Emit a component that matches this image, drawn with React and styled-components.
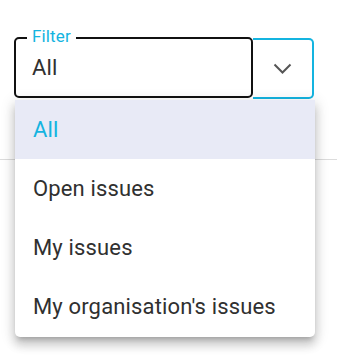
import React from "react";
import styled, { createGlobalStyle } from "styled-components";

const cyan = "#14b4e0";
const ink = "#303030";

const GlobalStyle = createGlobalStyle`
  body {
    margin: 0;
    background: #ffffff;
    font-family: Roboto, "Liberation Sans", sans-serif;
    letter-spacing: 0.00938em;
  }
`;

const Page = styled.main`
  position: relative;
  width: 337px;
  height: 360px;
  overflow: hidden;
`;

const Header = styled.div`
  height: 122px;
  padding: 37px 0 0 14px;
  border-bottom: 1px solid #dcdcdc;
`;

const FieldRow = styled.div`
  display: flex;
`;

const Field = styled.div`
  position: relative;
  box-sizing: border-box;
  width: 239px;
  height: 61px;
  border: 2px solid #111;
  border-radius: 5px;
  display: flex;
  align-items: center;
  padding: 0 16px;
  font-size: 22px;
  color: ${ink};
`;

const Label = styled.span`
  position: absolute;
  top: -13px;
  left: 11px;
  padding: 0 5px;
  background: #fff;
  font-size: 17px;
  line-height: 20px;
  color: ${cyan};
`;

const Toggle = styled.button`
  box-sizing: border-box;
  width: 61px;
  height: 61px;
  border: 2px solid ${cyan};
  border-left: none;
  border-radius: 0 5px 5px 0;
  background: #fff;
  display: flex;
  align-items: center;
  justify-content: center;
  padding: 0;
  margin-top: 1px;
`;

const Menu = styled.ul`
  position: absolute;
  top: 100px;
  left: 15px;
  width: 300px;
  margin: 0;
  padding: 0 0 1px;
  list-style: none;
  background: #fff;
  border-radius: 0 0 5px 5px;
  box-shadow: 0 5px 5px -3px rgba(0, 0, 0, 0.2), 0 8px 10px 1px rgba(0, 0, 0, 0.14),
    0 3px 14px 2px rgba(0, 0, 0, 0.12);
`;

const Item = styled.li`
  height: 59px;
  display: flex;
  align-items: center;
  padding: 0 18px;
  font-size: 22px;
  color: ${(p) => (p.$selected ? cyan : ink)};
  background: ${(p) => (p.$selected ? "#e8eaf6" : "transparent")};
`;

const options = ["All", "Open issues", "My issues", "My organisation's issues"];

export default function App() {
  return (
    <Page>
      <GlobalStyle />
      <Header>
        <FieldRow>
          <Field>
            <Label>Filter</Label>
            All
          </Field>
          <Toggle aria-label="Open filter">
            <svg width="19" height="11" viewBox="0 0 19 11" fill="none">
              <path d="M1.5 1.5 9.5 9.5l8-8" stroke="#555" strokeWidth="2" />
            </svg>
          </Toggle>
        </FieldRow>
      </Header>
      <Menu>
        {options.map((o) => (
          <Item key={o} $selected={o === "All"}>
            {o}
          </Item>
        ))}
      </Menu>
    </Page>
  );
}
